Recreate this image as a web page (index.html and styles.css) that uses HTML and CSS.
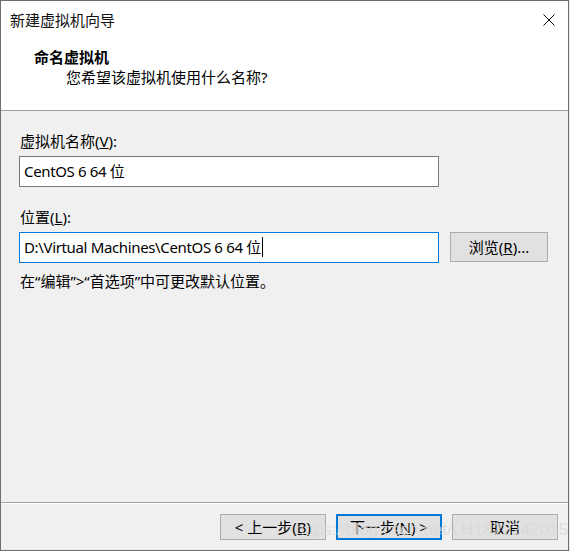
FILE: index.html
```html
<!DOCTYPE html>
<html lang="zh-CN">
<head>
<meta charset="utf-8">
<title>新建虚拟机向导</title>
<link rel="stylesheet" href="styles.css">
</head>
<body>
<div class="window">
  <div class="header">
    <div class="titlebar">
      <span class="title">新建虚拟机向导</span>
      <svg class="close" width="12" height="12" viewBox="0 0 12 12"><path d="M0.5 0.5 L11.5 11.5 M11.5 0.5 L0.5 11.5" stroke="#111" stroke-width="1" fill="none"/></svg>
    </div>
    <div class="heading">命名虚拟机</div>
    <div class="subheading">您希望该虚拟机使用什么名称?</div>
  </div>
  <div class="body">
    <div class="label">虚拟机名称(<u>V</u>):</div>
    <div class="input">CentOS 6 64 位</div>
    <div class="label label-gap">位置(<u>L</u>):</div>
    <div class="row">
      <div class="input focused">D:\Virtual Machines\CentOS 6 64 位<span class="caret"></span></div>
      <div class="btn browse">浏览(<u>R</u>)...</div>
    </div>
    <div class="hint">在“编辑”&gt;“首选项”中可更改默认位置。</div>
  </div>
  <div class="footer">
    <div class="btn">&lt; 上一步(<u>B</u>)</div>
    <div class="btn default">下一步(<u>N</u>) &gt;</div>
    <div class="btn">取消</div>
  </div>
  <div class="watermark">https://blog.csdn.net/LH1822242015</div>
</div>
</body>
</html>
```

FILE: styles.css
```css
html, body {
  margin: 0;
  padding: 0;
  background: #ececec;
}
body {
  font-family: "Noto Sans", "Noto Sans CJK SC", sans-serif;
  font-size: 15px;
  color: #000;
}
.window {
  position: relative;
  width: 569px;
  height: 551px;
  box-sizing: border-box;
  border: 1px solid #6e6e6e;
  background: #f0f0f0;
  display: flex;
  flex-direction: column;
}
.header {
  background: #fff;
  height: 110px;
  box-sizing: border-box;
  border-bottom: 1px solid #a0a0a0;
}
.titlebar {
  display: flex;
  justify-content: space-between;
  align-items: center;
  height: 20px;
  padding: 9px 13px 0 9px;
  line-height: 20px;
}
.title { color: #111; }
.close { display: block; margin-top: -1px; }
.heading {
  margin-top: 17px;
  padding-left: 33px;
  font-weight: bold;
  line-height: 20px;
}
.subheading {
  padding-left: 65px;
  line-height: 20px;
}
.body {
  flex: 1;
  padding: 20px 0 0 18px;
}
.label, .hint {
  line-height: 20px;
  padding-left: 1px;
}
.label-gap { margin-top: 20px; }
.input {
  margin-top: 5px;
  width: 420px;
  height: 31px;
  box-sizing: border-box;
  border: 1px solid #7a7a7a;
  background: #fff;
  padding-left: 4px;
  line-height: 29px;
  white-space: nowrap;
  letter-spacing: -0.35px;
}
.input.focused { border-color: #0078d7; }
.caret {
  display: inline-block;
  width: 1px;
  height: 20px;
  background: #000;
  margin-left: 1px;
  vertical-align: -4px;
}
.row {
  display: flex;
  align-items: flex-start;
  gap: 11px;
}
.btn {
  width: 106px;
  height: 26px;
  box-sizing: border-box;
  border: 1px solid #adadad;
  background: #e1e1e1;
  text-align: center;
  line-height: 24px;
}
.browse {
  margin-top: 5px;
  width: 98px;
  height: 30px;
  line-height: 28px;
}
.btn.default {
  border: 2px solid #0078d7;
  line-height: 22px;
}
.hint { margin-top: 8px; }
.footer {
  height: 48px;
  box-sizing: border-box;
  border-top: 1px solid #a0a0a0;
  box-shadow: inset 0 1px 0 #fff;
  display: flex;
  justify-content: flex-end;
  gap: 10px;
  padding: 11px 10px 0 0;
}
.watermark {
  position: absolute;
  left: 294px;
  top: 519px;
  font-family: "Liberation Sans", sans-serif;
  font-size: 17px;
  color: rgba(215, 215, 215, 0.75);
  pointer-events: none;
}
```
